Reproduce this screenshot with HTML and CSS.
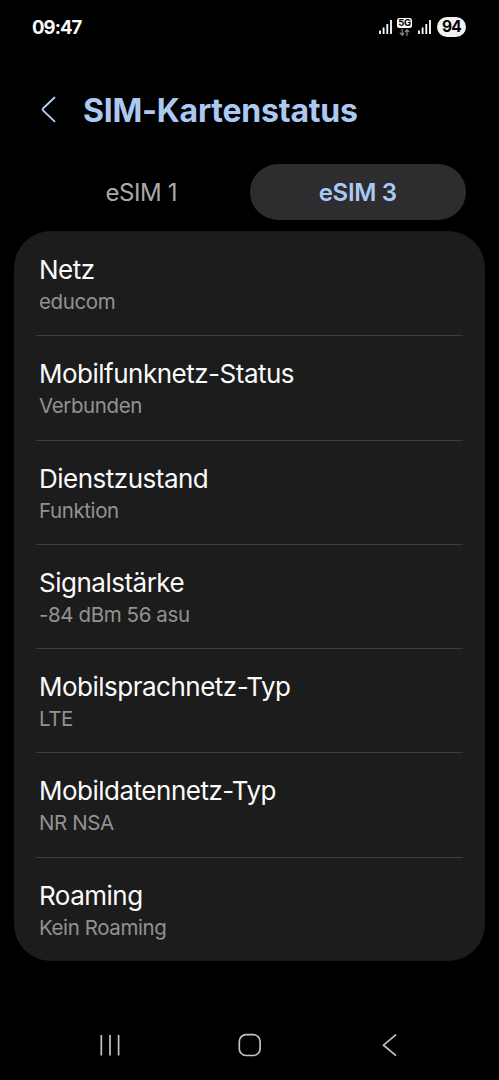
FILE: index.html
```
<!DOCTYPE html>
<html lang="de">
<head>
    <meta charset="UTF-8">
    <meta name="viewport" content="width=device-width, initial-scale=1.0">
    <title>SIM-Kartenstatus</title>
    <link rel="stylesheet" href="styles.css">
</head>
<body>
    <div class="screen">
        <div class="status-bar">
            <span class="clock">09:47</span>
            <div class="status-icons">
                <svg class="signal" width="13" height="14" viewBox="0 0 13 14">
                    <path d="M1 10.5V14M4.6 7.5V14M8.3 4V14M12 0V14"/>
                </svg>
                <div class="network">
                    <span class="network-label">5G</span>
                    <svg class="arrows" width="11" height="7" viewBox="0 0 11 7">
                        <path d="M3.2 0V6M0.8 3.7L3.2 6.2L5.2 4M8 7V1M5.8 3.2L8 0.8L10.3 3.2"/>
                    </svg>
                </div>
                <svg class="signal" width="13" height="14" viewBox="0 0 13 14">
                    <path d="M1 10.5V14M4.6 7.5V14M8.3 4V14M12 0V14"/>
                </svg>
                <span class="battery">94</span>
            </div>
        </div>

        <div class="header">
            <svg class="back" width="15" height="27" viewBox="0 0 15 27">
                <path d="M13.5 1.5L2 12.5Q1.2 13.4 2 14.3L13.5 25.3"/>
            </svg>
            <h1>SIM-Kartenstatus</h1>
        </div>

        <div class="tabs">
            <div class="tab">eSIM 1</div>
            <div class="tab active">eSIM 3</div>
        </div>

        <div class="card">
            <div class="row">
                <div class="title">Netz</div>
                <div class="value">educom</div>
            </div>
            <div class="row">
                <div class="title">Mobilfunknetz-Status</div>
                <div class="value">Verbunden</div>
            </div>
            <div class="row">
                <div class="title">Dienstzustand</div>
                <div class="value">Funktion</div>
            </div>
            <div class="row">
                <div class="title">Signalstärke</div>
                <div class="value">-84 dBm 56 asu</div>
            </div>
            <div class="row">
                <div class="title">Mobilsprachnetz-Typ</div>
                <div class="value">LTE</div>
            </div>
            <div class="row">
                <div class="title">Mobildatennetz-Typ</div>
                <div class="value">NR NSA</div>
            </div>
            <div class="row">
                <div class="title">Roaming</div>
                <div class="value">Kein Roaming</div>
            </div>
        </div>

        <div class="nav-bar">
            <svg width="24" height="24" viewBox="0 0 24 24">
                <path d="M3.3 2V22.5M12 2V22.5M20.6 2V22.5"/>
            </svg>
            <svg width="24" height="24" viewBox="0 0 24 24">
                <rect x="1.3" y="1.7" width="20.8" height="20.8" rx="6.8"/>
            </svg>
            <svg width="24" height="24" viewBox="0 0 24 24">
                <path d="M19 1.7L6.5 12.2L19 22.7"/>
            </svg>
        </div>
    </div>
</body>
</html>
```

FILE: styles.css
```
* {
    box-sizing: border-box;
}
body {
    margin: 0;
    background-color: #000;
    color: #fafafa;
    font-family: Inter, Roboto, sans-serif;
}
svg {
    display: block;
    fill: none;
}
.screen {
    display: flex;
    flex-direction: column;
    height: 1080px;
}

/* Status bar */
.status-bar {
    display: flex;
    justify-content: space-between;
    align-items: center;
    height: 54px;
    padding: 0 33px 0 32px;
}
.clock {
    font-size: 18.5px;
    font-weight: 700;
    letter-spacing: -0.9px;
}
.status-icons {
    display: flex;
    align-items: center;
}
.signal {
    stroke: #fff;
    stroke-width: 1.8;
}
.network {
    display: flex;
    flex-direction: column;
    align-items: center;
    gap: 1px;
    width: 15px;
    margin: 0 6px 0 5px;
}
.network-label {
    width: 15px;
    height: 10px;
    border-radius: 2.5px;
    background: #fff;
    color: #000;
    font-size: 9.5px;
    font-weight: 700;
    line-height: 10px;
    text-align: center;
    letter-spacing: -0.3px;
}
.arrows {
    stroke: #888;
    stroke-width: 1.2;
}
.battery {
    width: 29px;
    height: 20px;
    margin-left: 6px;
    border-radius: 10px;
    background: #f2f2f2;
    color: #000;
    font-size: 15.5px;
    font-weight: 700;
    line-height: 20px;
    text-align: center;
    letter-spacing: -0.8px;
}

/* Header */
.header {
    display: flex;
    align-items: center;
    gap: 27px;
    height: 110px;
    padding-left: 41px;
}
.back {
    stroke: #b4d0f8;
    stroke-width: 1.8;
    stroke-linecap: round;
}
h1 {
    margin: 0;
    padding-top: 2px;
    color: #abc9f3;
    font-size: 32px;
    font-weight: 700;
    letter-spacing: -0.23px;
}

/* Tabs */
.tabs {
    display: flex;
    height: 56px;
    padding: 0 33px;
}
.tab {
    flex: 1;
    border-radius: 28px;
    color: #aaa;
    font-size: 24px;
    line-height: 58px;
    text-align: center;
    letter-spacing: -0.4px;
}
.tab.active {
    background: #2d2d2f;
    color: #abc9f3;
    font-weight: 600;
    letter-spacing: -0.3px;
}

/* List */
.card {
    height: 730px;
    margin: 11px 14px 0;
    padding: 1px 22px 0;
    border-radius: 37px;
    background: #1c1c1c;
}
.row {
    height: 104.3px;
    padding: 21px 3px 0;
    border-bottom: 1px solid #3c3c3c;
}
.row:last-child {
    border-bottom: none;
}
.title {
    font-size: 26px;
    line-height: 34px;
    letter-spacing: -0.5px;
}
.value {
    margin-top: 1px;
    color: #929292;
    font-size: 20.5px;
    line-height: 28px;
    letter-spacing: -0.4px;
}

/* Navigation */
.nav-bar {
    display: flex;
    justify-content: space-between;
    margin-top: 72px;
    padding: 0 98px;
}
.nav-bar svg {
    stroke: #c4c4c4;
    stroke-width: 1.7;
}
```
